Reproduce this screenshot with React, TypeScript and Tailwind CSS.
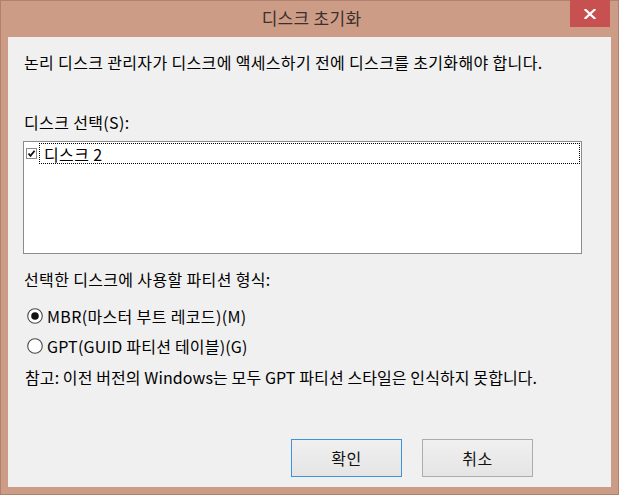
import React from 'react';

const FONT = '"Noto Sans CJK KR", "Noto Sans", sans-serif';

const CloseGlyph: React.FC = () => (
  <svg width="12" height="10" viewBox="0 0 12 10">
    <path d="M1.5 0.8 L10.5 9.2 M10.5 0.8 L1.5 9.2" stroke="#ffffff" strokeWidth="2.2" strokeLinecap="square" fill="none" />
  </svg>
);

const CheckBox: React.FC = () => (
  <svg width="11" height="11" viewBox="0 0 11 11" className="shrink-0">
    <rect x="0.5" y="0.5" width="10" height="10" fill="#ffffff" stroke="#8a8a8a" />
    <path d="M2.5 5.5 L4.5 7.8 L8.6 2.8" stroke="#111111" strokeWidth="1.8" fill="none" />
  </svg>
);

const Radio: React.FC<{ checked?: boolean }> = ({ checked }) => (
  <svg width="16" height="16" viewBox="0 0 16 16" className="shrink-0">
    <circle cx="8" cy="8" r="7.3" fill="#ffffff" stroke="#4a4a4a" strokeWidth="1.1" />
    {checked && <circle cx="8" cy="8" r="3.8" fill="#111111" />}
  </svg>
);

interface ButtonProps {
  label: string;
  primary?: boolean;
}

const DialogButton: React.FC<ButtonProps> = ({ label, primary }) => (
  <div
    className={`w-[111px] h-[38px] flex items-center justify-center border bg-gradient-to-b from-[#f0f0f0] to-[#e5e5e5] text-[16px] tracking-[0.5px] text-[#111] ${
      primary ? 'border-[#3c94e0]' : 'border-[#acacac]'
    }`}
  >
    {label}
  </div>
);

const App: React.FC = () => {
  return (
    <div className="w-[619px] h-[495px] bg-[#f0f0f0]" style={{ fontFamily: FONT }}>
      <div className="w-[619px] h-[495px] flex flex-col bg-[#cd9c87] border border-[#b0826e]">
        {/* title bar */}
        <div className="relative h-[36px] shrink-0 flex items-start justify-center">
          <span className="mt-[5px] ml-[4px] text-[17px] leading-[24px] tracking-[0.3px] text-[#3a302c]">디스크 초기화</span>
          <div className="absolute right-[8px] top-[-1px] w-[40px] h-[27px] bg-[#c75050] flex items-center justify-center">
            <CloseGlyph />
          </div>
        </div>

        {/* client area */}
        <div className="mx-[7px] mb-[7px] flex-1 flex flex-col bg-[#f0f0f0] pl-[15px] text-[16px] tracking-[0.35px] text-black">
          <p className="mt-[15px] h-[20px] leading-[20px] pl-px whitespace-nowrap">
            논리 디스크 관리자가 디스크에 액세스하기 전에 디스크를 초기화해야 합니다.
          </p>

          <p className="mt-[40px] h-[20px] leading-[20px] pl-px">디스크 선택(S):</p>

          <div className="mt-[9px] w-[559px] h-[113px] border border-[#8c8c8c] bg-white">
            <div className="mt-px h-[21px] flex items-center pl-[2px] pr-px">
              <CheckBox />
              <div className="ml-[2px] flex-1 h-[21px] flex items-center border border-dotted border-black pl-[4px]">
                디스크 2
              </div>
            </div>
          </div>

          <p className="mt-[15px] h-[20px] leading-[20px] pl-px">선택한 디스크에 사용할 파티션 형식:</p>

          <div className="mt-[17px] h-[20px] flex items-center pl-[4px]">
            <Radio checked />
            <span className="ml-[4px] leading-[20px]">MBR(마스터 부트 레코드)(M)</span>
          </div>

          <div className="mt-[10px] h-[20px] flex items-center pl-[4px]">
            <Radio />
            <span className="ml-[4px] leading-[20px] tracking-[0.2px]">GPT(GUID 파티션 테이블)(G)</span>
          </div>

          <p className="mt-[11px] h-[20px] leading-[20px] pl-[2px] whitespace-nowrap tracking-[0.1px]">
            참고: 이전 버전의 Windows는 모두 GPT 파티션 스타일은 인식하지 못합니다.
          </p>

          <div className="mt-[52px] flex gap-[20px] pl-[268px]">
            <DialogButton label="확인" primary />
            <DialogButton label="취소" />
          </div>
        </div>
      </div>
    </div>
  );
};

export default App;
